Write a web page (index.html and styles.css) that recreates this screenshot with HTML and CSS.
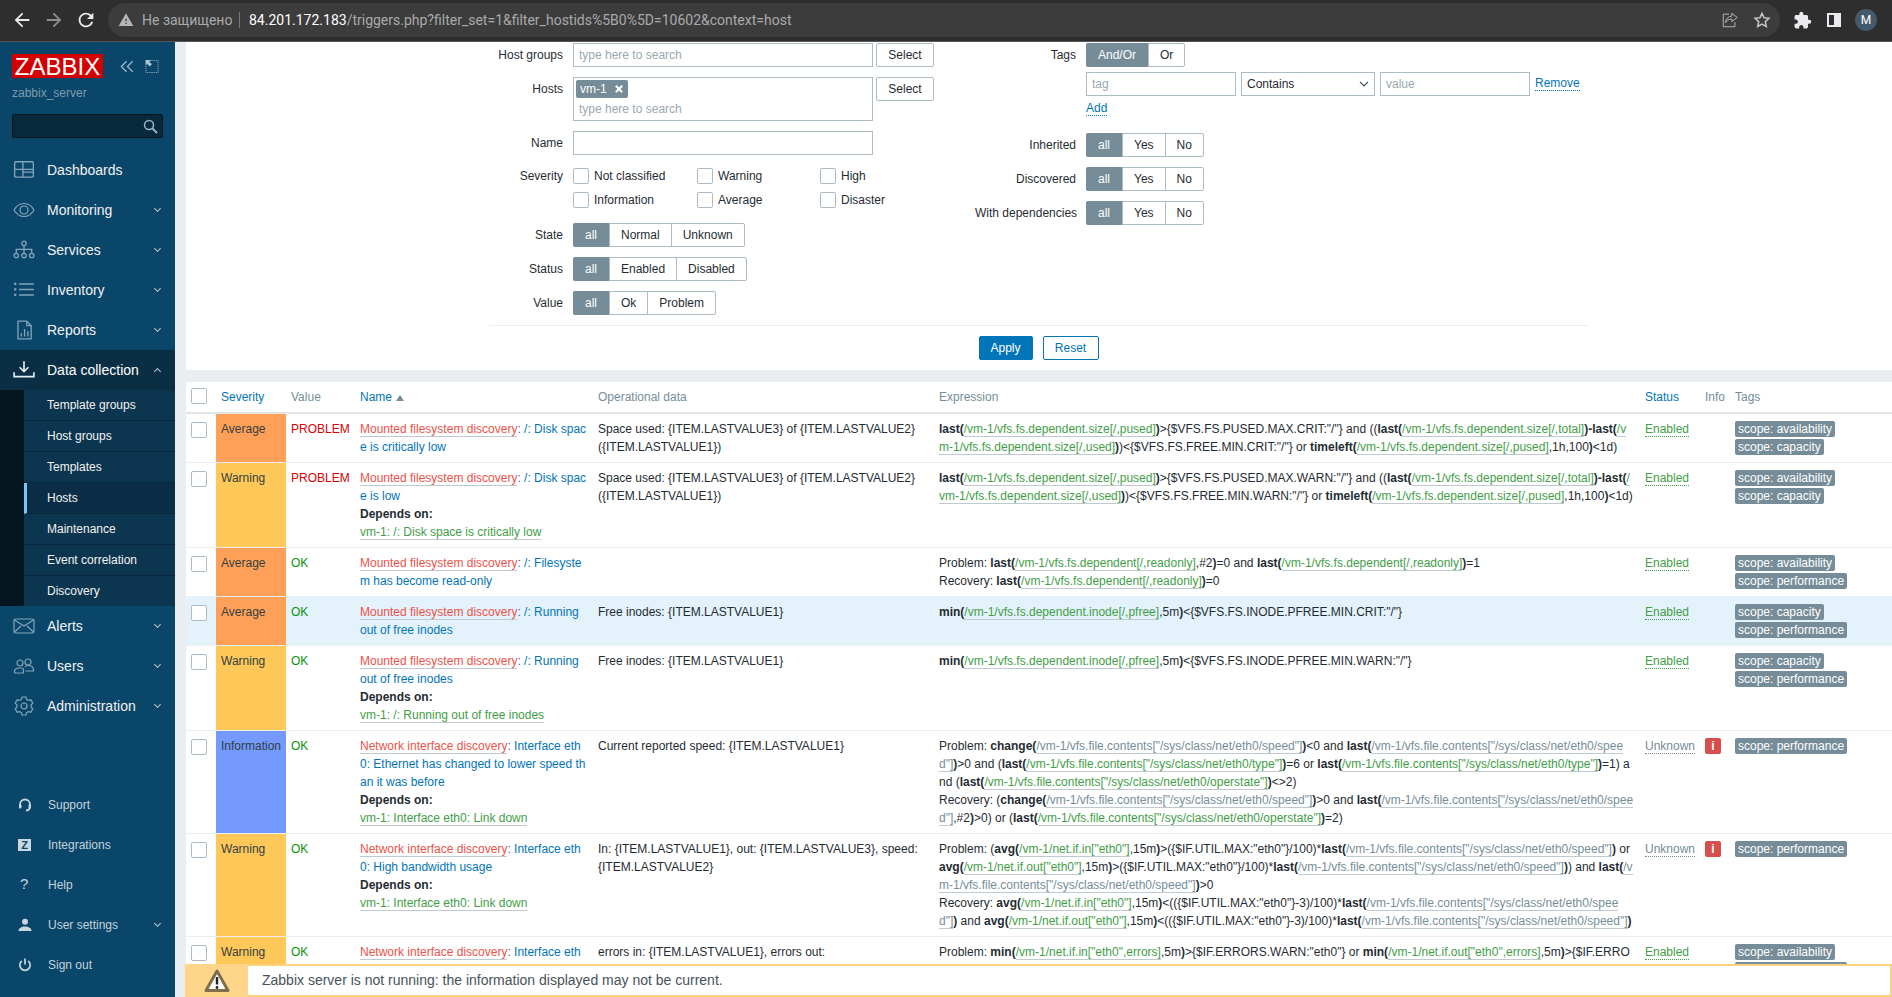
FILE: index.html
```html
<!DOCTYPE html>
<html lang="en">
<head>
  <meta charset="UTF-8" />
  <title>Configuration of triggers</title>
  <link rel="stylesheet" href="styles.css">
</head>
<body>

  <!-- browser chrome -->
  <div class="chrome">
    <svg class="nav-btn" viewBox="0 0 24 24"><path fill="#e8eaed" d="M20 11H7.83l5.59-5.59L12 4l-8 8 8 8 1.41-1.41L7.83 13H20v-2z"/></svg>
    <svg class="nav-btn" viewBox="0 0 24 24"><path fill="#8b8c8e" d="M4 11h12.17l-5.59-5.59L12 4l8 8-8 8-1.41-1.41L16.17 13H4v-2z"/></svg>
    <svg class="nav-btn" viewBox="0 0 24 24"><path fill="#e8eaed" d="M17.65 6.35A7.958 7.958 0 0012 4c-4.42 0-7.99 3.58-7.99 8s3.57 8 7.99 8c3.73 0 6.84-2.55 7.73-6h-2.08A5.99 5.99 0 0112 18c-3.31 0-6-2.69-6-6s2.69-6 6-6c1.66 0 3.14.69 4.22 1.78L13 11h7V4l-2.35 2.35z"/></svg>
    <div class="omnibox">
      <svg class="sec-icon" viewBox="0 0 24 24"><path fill="#b4b5b7" d="M1 21h22L12 2 1 21zm12-3h-2v-2h2v2zm0-4h-2v-4h2v4z"/></svg>
      <span class="sec-text">Не защищено</span>
      <span class="sec-sep"></span>
      <span class="url"><span class="url-host">84.201.172.183</span>/triggers.php?filter_set=1&amp;filter_hostids%5B0%5D=10602&amp;context=host</span>
      <svg class="omni-icon" viewBox="0 0 20 20" fill="none" stroke="#b4b5b7" stroke-width="1.1"><path d="M9 3.5H2.5v14h13v-5"/><path d="M12 2.5l6 4.7-6 4.6V9c-3.5 0-5.6 1.300-7 4 .3-4.200 2.800-7 7-7.300z"/></svg>
      <svg class="omni-icon star" viewBox="0 0 20 20" fill="none" stroke="#c4c5c7" stroke-width="1.700"><path d="M10 2.500l2.300 5 5.400.6-4 3.700 1.100 5.400L10 14.500l-4.800 2.700 1.100-5.400-4-3.700 5.400-.6z"/></svg>
    </div>
    <div class="chrome-btn"><svg width="19" height="19" viewBox="0 0 24 24"><path fill="#e8eaed" d="M20.500 11H19V7c0-1.100-.9-2-2-2h-4V3.500C13 2.120 11.880 1 10.500 1S8 2.120 8 3.500V5H4c-1.100 0-1.990.9-1.990 2v3.800H3.500c1.490 0 2.700 1.210 2.700 2.700s-1.210 2.700-2.700 2.700H2V20c0 1.100.9 2 2 2h3.800v-1.500c0-1.490 1.210-2.700 2.700-2.700 1.490 0 2.700 1.210 2.700 2.700V22H17c1.100 0 2-.9 2-2v-4h1.500c1.380 0 2.500-1.120 2.500-2.500S21.880 11 20.500 11z"/></svg></div>
    <div class="chrome-btn"><span class="side-panel"></span></div>
    <div class="chrome-btn"><span class="avatar">M</span></div>
  </div>

  <div class="app">

    <nav class="sidebar">
      <div class="logo-row">
        <span class="logo">ZABBIX</span>
        <svg class="logo-icon first" viewBox="0 0 16 14" fill="none" stroke="#a9c1d1" stroke-width="1.300"><path d="M7.500 1L1.500 7l6 6M14.500 1l-6 6 6 6"/></svg>
        <svg class="logo-icon" viewBox="0 0 14 14" fill="none" stroke="#a9c1d1"><path d="M5.500.5H13.500V13.500H.5V5.500" stroke-dasharray="1 1"/><path fill="#a9c1d1" stroke="none" d="M0 0h6L4.200 1.800 7 4.600 4.600 7 1.800 4.200 0 6z"/></svg>
      </div>
      <div class="server-name">zabbix_server</div>
      <div class="side-search">
        <svg width="15" height="15" viewBox="0 0 15 15" fill="none" stroke="#9db5c4" stroke-width="1.500"><circle cx="6" cy="6" r="4.500"/><path d="M9.500 9.500L14 14" stroke-width="2"/></svg>
      </div>

      <ul class="menu">
        <li class="menu-item">
          <svg class="menu-icon" viewBox="0 0 20 18"><rect x="1.500" y="1.500" width="17" height="14" rx="1"/><path d="M1.500 8.500h17M9 1.500v14M9 11h9.500"/></svg>
          Dashboards
        </li>
        <li class="menu-item">
          <svg class="menu-icon" viewBox="0 0 22 16"><path d="M1 8c2.500-4.500 6-6.500 10-6.500S18.500 3.500 21 8c-2.500 4.500-6 6.500-10 6.500S3.500 12.500 1 8z"/><circle cx="11" cy="8" r="4"/></svg>
          Monitoring <i class="chev"></i>
        </li>
        <li class="menu-item">
          <svg class="menu-icon" viewBox="0 0 20 18"><circle cx="10" cy="3" r="2"/><circle cx="3" cy="14" r="2"/><circle cx="10" cy="14" r="2"/><circle cx="17" cy="14" r="2"/><path d="M10 5v7M3 12V8.500h14V12"/></svg>
          Services <i class="chev"></i>
        </li>
        <li class="menu-item">
          <svg class="menu-icon" viewBox="0 0 20 18"><path d="M5.500 3.500H19M5.500 8.500H19M5.500 13.500H19" stroke-width="1.500"/><path d="M1 3.500h2M1 8.500h2M1 13.500h2" stroke-width="2"/></svg>
          Inventory <i class="chev"></i>
        </li>
        <li class="menu-item">
          <svg class="menu-icon" viewBox="0 0 20 18"><path d="M4.500 17V1h8l4 4v12z"/><path d="M12.500 1v4h4M7.500 15v-3M10.500 15V8M13.500 15v-5" /></svg>
          Reports <i class="chev"></i>
        </li>
        <li class="menu-item open">
          <svg class="menu-icon" viewBox="0 0 20 18"><path d="M10 1v9M6 6.500l4 4 4-4M1 11v4h18v-4" stroke-width="1.500"/></svg>
          Data collection <i class="chev up"></i>
        </li>
        <li class="submenu">
          <ul>
            <li>Template groups</li>
            <li>Host groups</li>
            <li>Templates</li>
            <li class="active">Hosts</li>
            <li>Maintenance</li>
            <li>Event correlation</li>
            <li>Discovery</li>
          </ul>
        </li>
        <li class="menu-item">
          <svg class="menu-icon" viewBox="0 0 22 16"><rect x="1" y="1" width="20" height="14" rx="1.500"/><path d="M1.500 2l9.500 6 9.500-6M1.500 14L8 8M20.500 14L14 8"/></svg>
          Alerts <i class="chev"></i>
        </li>
        <li class="menu-item">
          <svg class="menu-icon" viewBox="0 0 22 16"><circle cx="7" cy="5" r="3"/><circle cx="15" cy="4" r="3"/><path d="M1.500 15v-1.500c0-2 2-3.500 5-3.500h1c2 0 3 1 3 1.500V15zM12 9c1-1 2-1.500 3-1.500 3.500 0 5.500 2 5.500 4.500v1h-8"/></svg>
          Users <i class="chev"></i>
        </li>
        <li class="menu-item">
          <svg class="menu-icon" viewBox="0 0 20 20"><path d="M8 2h4l.6 2.300 1.900 1.100 2.300-.6 2 3.400-1.700 1.800 0 2-0 0 1.700 1.800-2 3.400-2.300-.6-1.900 1.100L12 20H8l-.6-2.300-1.900-1.100-2.300.6-2-3.400 1.700-1.800v-2L1.200 8.200l2-3.400 2.300.6 1.900-1.100z" transform="translate(0 -1)"/><circle cx="10" cy="10" r="3"/></svg>
          Administration <i class="chev"></i>
        </li>
      </ul>

      <ul class="menu-footer">
        <li>
          <svg class="foot-icon" viewBox="0 0 14 14" fill="none" stroke="#c9d6df" stroke-width="1.800"><path d="M2 8V6.500a5 5 0 0110 0V8"/><path d="M8 12.500c2 0 3.500-1 4-3"/><rect x="1" y="6.500" width="2.500" height="4" rx="1" fill="#c9d6df" stroke="none"/><rect x="10.500" y="6.500" width="2.500" height="4" rx="1" fill="#c9d6df" stroke="none"/></svg>
          Support
        </li>
        <li><span class="z-box">Z</span>Integrations</li>
        <li><span class="q-mark">?</span>Help</li>
        <li>
          <svg class="foot-icon" viewBox="0 0 14 14" fill="#c9d6df"><circle cx="7" cy="3.800" r="3"/><path d="M0.500 13c0-3 3-4.500 6.500-4.500s6.500 1.500 6.500 4.500z"/></svg>
          User settings <i class="chev"></i>
        </li>
        <li>
          <svg class="foot-icon" viewBox="0 0 14 14" fill="none" stroke="#c9d6df" stroke-width="1.700"><path d="M7 .5v6"/><path d="M3.800 3a5.200 5.200 0 106.400 0"/></svg>
          Sign out
        </li>
      </ul>
    </nav>

    <main class="main">

      <section class="filter">
        <div class="filter-cols">
          <div class="filter-left">
            <div class="form-row">
              <label class="form-label">Host groups</label>
              <input class="text-input wide" placeholder="type here to search">
              <button class="btn-select">Select</button>
            </div>
            <div class="form-row">
              <label class="form-label">Hosts</label>
              <div class="multiselect">
                <span class="chip">vm-1 <svg width="8" height="8" viewBox="0 0 8 8" stroke="#fff" stroke-width="2"><path d="M.8.800l6.400 6.400M7.200.800L.8 7.200"/></svg></span>
                <input class="multi-input" placeholder="type here to search">
              </div>
              <button class="btn-select">Select</button>
            </div>
            <div class="form-row name-row">
              <label class="form-label">Name</label>
              <input class="text-input wide">
            </div>
            <div class="form-row severity-row">
              <label class="form-label severity-label">Severity</label>
              <div class="severity-grid">
                <label class="check"><input type="checkbox" class="cb">Not classified</label>
                <label class="check"><input type="checkbox" class="cb">Warning</label>
                <label class="check"><input type="checkbox" class="cb">High</label>
                <label class="check"><input type="checkbox" class="cb">Information</label>
                <label class="check"><input type="checkbox" class="cb">Average</label>
                <label class="check"><input type="checkbox" class="cb">Disaster</label>
              </div>
            </div>
            <div class="form-row">
              <label class="form-label">State</label>
              <div class="seg"><span class="on">all</span><span>Normal</span><span>Unknown</span></div>
            </div>
            <div class="form-row">
              <label class="form-label">Status</label>
              <div class="seg"><span class="on">all</span><span>Enabled</span><span>Disabled</span></div>
            </div>
            <div class="form-row">
              <label class="form-label">Value</label>
              <div class="seg"><span class="on">all</span><span>Ok</span><span>Problem</span></div>
            </div>
          </div>

          <div class="filter-right">
            <div class="form-row tight">
              <label class="form-label">Tags</label>
              <div class="seg"><span class="on">And/Or</span><span>Or</span></div>
            </div>
            <div class="form-row tight">
              <span class="form-label"></span>
              <div class="tag-line">
                <input class="text-input tag-input" placeholder="tag">
                <div class="select-box">Contains <svg width="10" height="6" viewBox="0 0 10 6" fill="none" stroke="#3c4a52" stroke-width="1.200"><path d="M1 .8l4 4 4-4"/></svg></div>
                <input class="text-input tag-input" placeholder="value">
                <a class="act-link">Remove</a>
              </div>
            </div>
            <div class="form-row add-row">
              <span class="form-label"></span>
              <a class="act-link">Add</a>
            </div>
            <div class="form-row">
              <label class="form-label">Inherited</label>
              <div class="seg"><span class="on">all</span><span>Yes</span><span>No</span></div>
            </div>
            <div class="form-row">
              <label class="form-label">Discovered</label>
              <div class="seg"><span class="on">all</span><span>Yes</span><span>No</span></div>
            </div>
            <div class="form-row">
              <label class="form-label">With dependencies</label>
              <div class="seg"><span class="on">all</span><span>Yes</span><span>No</span></div>
            </div>
          </div>
        </div>
        <div class="filter-actions">
          <button class="btn-apply">Apply</button>
          <button class="btn-reset">Reset</button>
        </div>
      </section>

      <table class="triggers">
        <colgroup>
          <col class="c-check"><col class="c-sev"><col class="c-val"><col class="c-name"><col class="c-op"><col class="c-expr"><col class="c-status"><col class="c-info"><col>
        </colgroup>
        <thead>
          <tr>
            <th><input type="checkbox" class="cb"></th>
            <th class="sortable">Severity</th>
            <th>Value</th>
            <th class="sortable">Name <i class="sort-up"></i></th>
            <th>Operational data</th>
            <th>Expression</th>
            <th class="sortable">Status</th>
            <th>Info</th>
            <th>Tags</th>
          </tr>
        </thead>
        <tbody>
          <tr>
            <td><input type="checkbox" class="cb"></td>
            <td class="sev average">Average</td>
            <td class="problem">PROBLEM</td>
            <td class="name"><a class="tpl">Mounted filesystem discovery</a>: <a class="nm">/: Disk space is critically low</a></td>
            <td>Space used: {ITEM.LASTVALUE3} of {ITEM.LASTVALUE2} ({ITEM.LASTVALUE1})</td>
            <td class="expr"><b>last(</b><a>/vm-1/vfs.fs.dependent.size[/,pused]</a><b>)</b>&gt;{$VFS.FS.PUSED.MAX.CRIT:"/"} and ((<b>last(</b><a>/vm-1/vfs.fs.dependent.size[/,total]</a><b>)-last(</b><a>/vm-1/vfs.fs.dependent.size[/,used]</a><b>)</b>)&lt;{$VFS.FS.FREE.MIN.CRIT:"/"} or <b>timeleft(</b><a>/vm-1/vfs.fs.dependent.size[/,pused]</a>,1h,100<b>)</b>&lt;1d)</td>
            <td><a class="st ok">Enabled</a></td>
            <td></td>
            <td><span class="tag">scope: availability</span><span class="tag">scope: capacity</span></td>
          </tr>
          <tr>
            <td><input type="checkbox" class="cb"></td>
            <td class="sev warning">Warning</td>
            <td class="problem">PROBLEM</td>
            <td class="name"><a class="tpl">Mounted filesystem discovery</a>: <a class="nm">/: Disk space is low</a><br><strong>Depends on:</strong><br><a class="dep">vm-1: /: Disk space is critically low</a></td>
            <td>Space used: {ITEM.LASTVALUE3} of {ITEM.LASTVALUE2} ({ITEM.LASTVALUE1})</td>
            <td class="expr"><b>last(</b><a>/vm-1/vfs.fs.dependent.size[/,pused]</a><b>)</b>&gt;{$VFS.FS.PUSED.MAX.WARN:"/"} and ((<b>last(</b><a>/vm-1/vfs.fs.dependent.size[/,total]</a><b>)-last(</b><a>/vm-1/vfs.fs.dependent.size[/,used]</a><b>)</b>)&lt;{$VFS.FS.FREE.MIN.WARN:"/"} or <b>timeleft(</b><a>/vm-1/vfs.fs.dependent.size[/,pused]</a>,1h,100<b>)</b>&lt;1d)</td>
            <td><a class="st ok">Enabled</a></td>
            <td></td>
            <td><span class="tag">scope: availability</span><span class="tag">scope: capacity</span></td>
          </tr>
          <tr>
            <td><input type="checkbox" class="cb"></td>
            <td class="sev average">Average</td>
            <td class="okay">OK</td>
            <td class="name"><a class="tpl">Mounted filesystem discovery</a>: <a class="nm">/: Filesystem has become read-only</a></td>
            <td></td>
            <td class="expr">Problem: <b>last(</b><a>/vm-1/vfs.fs.dependent[/,readonly]</a>,#2<b>)</b>=0 and <b>last(</b><a>/vm-1/vfs.fs.dependent[/,readonly]</a><b>)</b>=1<br>Recovery: <b>last(</b><a>/vm-1/vfs.fs.dependent[/,readonly]</a><b>)</b>=0</td>
            <td><a class="st ok">Enabled</a></td>
            <td></td>
            <td><span class="tag">scope: availability</span><span class="tag">scope: performance</span></td>
          </tr>
          <tr class="hovered">
            <td><input type="checkbox" class="cb"></td>
            <td class="sev average">Average</td>
            <td class="okay">OK</td>
            <td class="name"><a class="tpl">Mounted filesystem discovery</a>: <a class="nm">/: Running out of free inodes</a></td>
            <td>Free inodes: {ITEM.LASTVALUE1}</td>
            <td class="expr"><b>min(</b><a>/vm-1/vfs.fs.dependent.inode[/,pfree]</a>,5m<b>)</b>&lt;{$VFS.FS.INODE.PFREE.MIN.CRIT:"/"}</td>
            <td><a class="st ok">Enabled</a></td>
            <td></td>
            <td><span class="tag">scope: capacity</span><span class="tag">scope: performance</span></td>
          </tr>
          <tr>
            <td><input type="checkbox" class="cb"></td>
            <td class="sev warning">Warning</td>
            <td class="okay">OK</td>
            <td class="name"><a class="tpl">Mounted filesystem discovery</a>: <a class="nm">/: Running out of free inodes</a><br><strong>Depends on:</strong><br><a class="dep">vm-1: /: Running out of free inodes</a></td>
            <td>Free inodes: {ITEM.LASTVALUE1}</td>
            <td class="expr"><b>min(</b><a>/vm-1/vfs.fs.dependent.inode[/,pfree]</a>,5m<b>)</b>&lt;{$VFS.FS.INODE.PFREE.MIN.WARN:"/"}</td>
            <td><a class="st ok">Enabled</a></td>
            <td></td>
            <td><span class="tag">scope: capacity</span><span class="tag">scope: performance</span></td>
          </tr>
          <tr>
            <td><input type="checkbox" class="cb"></td>
            <td class="sev information">Information</td>
            <td class="okay">OK</td>
            <td class="name"><a class="tpl">Network interface discovery</a>: <a class="nm">Interface eth0: Ethernet has changed to lower speed than it was before</a><br><strong>Depends on:</strong><br><a class="dep">vm-1: Interface eth0: Link down</a></td>
            <td>Current reported speed: {ITEM.LASTVALUE1}</td>
            <td class="expr">Problem: <b>change(</b><a class="un">/vm-1/vfs.file.contents["/sys/class/net/eth0/speed"]</a><b>)</b>&lt;0 and <b>last(</b><a class="un">/vm-1/vfs.file.contents["/sys/class/net/eth0/speed"]</a><b>)</b>&gt;0 and (<b>last(</b><a>/vm-1/vfs.file.contents["/sys/class/net/eth0/type"]</a><b>)</b>=6 or <b>last(</b><a>/vm-1/vfs.file.contents["/sys/class/net/eth0/type"]</a><b>)</b>=1) and (<b>last(</b><a>/vm-1/vfs.file.contents["/sys/class/net/eth0/operstate"]</a><b>)</b>&lt;&gt;2)<br>Recovery: (<b>change(</b><a class="un">/vm-1/vfs.file.contents["/sys/class/net/eth0/speed"]</a><b>)</b>&gt;0 and <b>last(</b><a class="un">/vm-1/vfs.file.contents["/sys/class/net/eth0/speed"]</a>,#2<b>)</b>&gt;0) or (<b>last(</b><a>/vm-1/vfs.file.contents["/sys/class/net/eth0/operstate"]</a><b>)</b>=2)</td>
            <td><a class="st un">Unknown</a></td>
            <td><span class="info-badge">i</span></td>
            <td><span class="tag">scope: performance</span></td>
          </tr>
          <tr>
            <td><input type="checkbox" class="cb"></td>
            <td class="sev warning">Warning</td>
            <td class="okay">OK</td>
            <td class="name"><a class="tpl">Network interface discovery</a>: <a class="nm">Interface eth0: High bandwidth usage</a><br><strong>Depends on:</strong><br><a class="dep">vm-1: Interface eth0: Link down</a></td>
            <td>In: {ITEM.LASTVALUE1}, out: {ITEM.LASTVALUE3}, speed: {ITEM.LASTVALUE2}</td>
            <td class="expr">Problem: (<b>avg(</b><a>/vm-1/net.if.in["eth0"]</a>,15m<b>)</b>&gt;({$IF.UTIL.MAX:"eth0"}/100)*<b>last(</b><a class="un">/vm-1/vfs.file.contents["/sys/class/net/eth0/speed"]</a><b>)</b> or <b>avg(</b><a>/vm-1/net.if.out["eth0"]</a>,15m<b>)</b>&gt;({$IF.UTIL.MAX:"eth0"}/100)*<b>last(</b><a class="un">/vm-1/vfs.file.contents["/sys/class/net/eth0/speed"]</a><b>)</b>) and <b>last(</b><a class="un">/vm-1/vfs.file.contents["/sys/class/net/eth0/speed"]</a><b>)</b>&gt;0<br>Recovery: <b>avg(</b><a>/vm-1/net.if.in["eth0"]</a>,15m<b>)</b>&lt;(({$IF.UTIL.MAX:"eth0"}-3)/100)*<b>last(</b><a class="un">/vm-1/vfs.file.contents["/sys/class/net/eth0/speed"]</a><b>)</b> and <b>avg(</b><a>/vm-1/net.if.out["eth0"]</a>,15m<b>)</b>&lt;(({$IF.UTIL.MAX:"eth0"}-3)/100)*<b>last(</b><a class="un">/vm-1/vfs.file.contents["/sys/class/net/eth0/speed"]</a><b>)</b></td>
            <td><a class="st un">Unknown</a></td>
            <td><span class="info-badge">i</span></td>
            <td><span class="tag">scope: performance</span></td>
          </tr>
          <tr>
            <td><input type="checkbox" class="cb"></td>
            <td class="sev warning">Warning</td>
            <td class="okay">OK</td>
            <td class="name"><a class="tpl">Network interface discovery</a>: <a class="nm">Interface eth0: High error rate</a></td>
            <td>errors in: {ITEM.LASTVALUE1}, errors out: {ITEM.LASTVALUE2}</td>
            <td class="expr">Problem: <b>min(</b><a>/vm-1/net.if.in["eth0",errors]</a>,5m<b>)</b>&gt;{$IF.ERRORS.WARN:"eth0"} or <b>min(</b><a>/vm-1/net.if.out["eth0",errors]</a>,5m<b>)</b>&gt;{$IF.ERRORS.WARN:"eth0"}</td>
            <td><a class="st ok">Enabled</a></td>
            <td></td>
            <td><span class="tag">scope: availability</span><span class="tag">scope: performance</span></td>
          </tr>
        </tbody>
      </table>

      <div class="server-msg">
        <div class="msg-icon">
          <svg width="26" height="24" viewBox="0 0 26 24"><path d="M13 2L2 21.500h22z" fill="#fff" stroke="#7f6d4c" stroke-width="3" stroke-linejoin="round"/><path d="M13 8v7.500" stroke="#222" stroke-width="2.400"/><circle cx="13" cy="18.500" r="1.400" fill="#222"/></svg>
        </div>
        <div class="msg-text">Zabbix server is not running: the information displayed may not be current.</div>
      </div>
    </main>
  </div>

</body>
</html>
```

FILE: styles.css
```css
* {
  margin: 0;
  padding: 0;
  box-sizing: border-box;
}

html, body {
  height: 100%;
  overflow: hidden;
}

body {
  font-family: 'Liberation Sans', Arial, sans-serif;
  font-size: 12px;
  line-height: 18px;
  color: #1f2c33;
  background: #fff;
}

ul {
  list-style: none;
}

/* browser chrome */
.chrome {
  height: 42px;
  display: flex;
  align-items: center;
  padding: 0 10px 1px 6px;
  background: #2e2e2e;
  border-bottom: 1px solid #565656;
  font-family: Roboto, sans-serif;
  font-size: 14px;
}

.nav-btn {
  width: 32px;
  height: 22px;
  flex: none;
}

.omnibox {
  flex: 1;
  height: 34px;
  margin: 0 6px;
  padding: 0 9px 0 10px;
  display: flex;
  align-items: center;
  background: #3c3c3c;
  border-radius: 17px;
}

.sec-icon {
  width: 16px;
  height: 16px;
  margin-right: 8px;
}

.sec-text {
  width: 89px;
  color: #a9aaac;
  white-space: nowrap;
}

.sec-sep {
  width: 1px;
  height: 16px;
  margin: 0 9px 0 8px;
  background: #77787a;
}

.url {
  flex: 1;
  color: #a9aaac;
  white-space: nowrap;
}

.url-host {
  color: #fff;
}

.omni-icon {
  width: 18px;
  height: 18px;
}

.omni-icon.star {
  margin-left: 14px;
}

.chrome-btn {
  width: 32px;
  flex: none;
  display: flex;
  justify-content: center;
  align-items: center;
}

.side-panel {
  width: 14px;
  height: 14px;
  border: 2px solid #e8eaed;
  border-left-width: 2px;
  background: linear-gradient(to right, #2e2e2e 50%, #e8eaed 50%);
}

.avatar {
  width: 22px;
  height: 22px;
  border-radius: 50%;
  background: #44596a;
  color: #fff;
  font-size: 12px;
  line-height: 22px;
  text-align: center;
}

.app {
  height: 955px;
  display: flex;
  overflow: hidden;
}

/* sidebar */
.sidebar {
  width: 175px;
  flex: none;
  display: flex;
  flex-direction: column;
  padding-top: 12px;
  background: #0a466a;
  color: #f2f2f2;
}

.logo-row {
  display: flex;
  align-items: center;
  padding-left: 12px;
  height: 24px;
}

.logo {
  width: 91px;
  height: 24px;
  background: #d40000;
  color: #fff;
  font-size: 24px;
  line-height: 25px;
  text-align: center;
}

.logo-icon {
  width: 14px;
  height: 13px;
  margin-left: 11px;
}

.logo-icon.first {
  margin-left: 17px;
}

.server-name {
  margin: 6px 12px 0;
  color: #7e9bae;
}

.side-search {
  height: 24px;
  margin: 12px 12px 12px;
  padding-right: 4px;
  display: flex;
  align-items: center;
  justify-content: flex-end;
  background: #08283c;
  border: 1px solid #04171f;
  border-radius: 2px;
}

.menu-item {
  position: relative;
  height: 40px;
  display: flex;
  align-items: center;
  padding-left: 47px;
  font-size: 14px;
}

.menu-item.open {
  background: #0a2f45;
  color: #fff;
}

.menu-icon {
  position: absolute;
  left: 13px;
  top: 10px;
  width: 22px;
  height: 20px;
  fill: none;
  stroke: #84a4b8;
  stroke-width: 1.200;
}

.open .menu-icon {
  stroke: #e8eef2;
}

.chev {
  position: absolute;
  right: 15px;
  top: 50%;
  width: 5px;
  height: 5px;
  margin-top: -4px;
  border-right: 1px solid #b7c9d4;
  border-bottom: 1px solid #b7c9d4;
  transform: rotate(45deg);
}

.chev.up {
  margin-top: -1px;
  transform: rotate(-135deg);
}

.submenu {
  padding-left: 24px;
  background: #04161f;
}

.submenu li {
  height: 31px;
  padding: 6px 0 0 23px;
  background: #0c3550;
  border-bottom: 1px solid #07263a;
  color: #f2f2f2;
}

.submenu li:last-child {
  height: 30px;
  border-bottom: none;
}

.submenu li.active {
  padding-left: 20px;
  background: #0b2e46;
  border-left: 3px solid #7cc5fa;
}

.menu-footer {
  margin-top: auto;
  padding-bottom: 12px;
}

.menu-footer li {
  position: relative;
  height: 40px;
  display: flex;
  align-items: center;
  padding-left: 48px;
  color: #c4d2dc;
}

.foot-icon {
  position: absolute;
  left: 18px;
  top: 13px;
  width: 14px;
  height: 14px;
}

.z-box {
  position: absolute;
  left: 18px;
  top: 14px;
  width: 13px;
  height: 12px;
  background: #c9d6df;
  color: #0a466a;
  font-size: 11px;
  font-weight: bold;
  line-height: 12px;
  text-align: center;
}

.q-mark {
  position: absolute;
  left: 20px;
  top: 10px;
  font-size: 15px;
  color: #c9d6df;
}

/* main area */
.main {
  position: relative;
  flex: 1;
  min-width: 0;
  padding-left: 10px;
  background: #ebeef0;
  overflow: hidden;
}

.filter {
  margin: 0 0 12px 1px;
  padding: 1px 0 10px 303px;
  background: #fff;
}

.filter-cols {
  display: flex;
}

.filter-left {
  width: 486px;
  flex: none;
}

.form-row {
  display: flex;
  margin-bottom: 10px;
}

.form-row:last-child {
  margin-bottom: 0;
}

.form-row.tight {
  margin-bottom: 5px;
}

.form-label {
  width: 74px;
  flex: none;
  margin-right: 10px;
  line-height: 24px;
  text-align: right;
  white-space: nowrap;
}

.filter-right .form-label {
  width: 101px;
}

.text-input {
  height: 24px;
  padding: 0 5px;
  border: 1px solid #acbbc4;
  font: inherit;
  color: #1f2c33;
  outline: none;
}

.text-input::placeholder,
.multi-input::placeholder {
  color: #9aa8b0;
  opacity: 1;
}

.wide {
  width: 300px;
}

.btn-select {
  width: 58px;
  height: 24px;
  margin-left: 3px;
  background: #fff;
  border: 1px solid #acbbc4;
  border-radius: 2px;
  font: inherit;
  color: #1f2c33;
}

.multiselect {
  width: 300px;
  height: 44px;
  padding: 2px 5px 0 2px;
  border: 1px solid #acbbc4;
}

.chip {
  display: flex;
  align-items: center;
  justify-content: space-between;
  width: 52px;
  height: 18px;
  padding: 0 5px 0 4px;
  background: #768d99;
  border-radius: 2px;
  color: #fff;
}

.multi-input {
  display: block;
  width: 280px;
  height: 22px;
  margin-left: 3px;
  border: none;
  font: inherit;
  outline: none;
}

.name-row {
  margin-bottom: 13px;
}

.severity-row {
  margin-bottom: 14px;
}

.severity-label {
  line-height: 17px;
}

.severity-grid {
  display: grid;
  grid-template-columns: 124px 123px 100px;
  row-gap: 7px;
}

.check {
  display: flex;
  align-items: center;
  height: 18px;
  margin-top: -1px;
}

.cb {
  appearance: none;
  display: block;
  width: 16px;
  height: 16px;
  flex: none;
  background: #fff;
  border: 1px solid #acbbc4;
  border-radius: 2px;
}

.check .cb {
  margin-right: 5px;
}

.seg {
  display: flex;
  height: 24px;
  line-height: 22px;
  border: 1px solid #acbbc4;
  border-radius: 2px;
}

.seg span {
  padding: 0 11px;
  border-left: 1px solid #acbbc4;
  white-space: nowrap;
}

.seg span.on {
  margin: -1px 0 -1px -1px;
  padding: 1px 12px;
  background: #768d99;
  border: none;
  border-radius: 2px 0 0 2px;
  color: #fff;
}

.tag-line {
  display: flex;
  align-items: center;
}

.tag-input {
  width: 150px;
}

.select-box {
  width: 134px;
  height: 24px;
  margin: 0 5px;
  padding: 0 5px;
  display: flex;
  align-items: center;
  justify-content: space-between;
  border: 1px solid #acbbc4;
}

.act-link {
  color: #0275b8;
  border-bottom: 1px dotted #0275b8;
  line-height: 14px;
}

.tag-line .act-link {
  margin: -2px 0 0 5px;
}

.add-row {
  height: 22px;
  margin-bottom: 10px;
  align-items: flex-start;
}

.add-row .form-label {
  line-height: 18px;
}

.filter-actions {
  width: 1099px;
  margin-top: 10px;
  padding-top: 10px;
  display: flex;
  justify-content: center;
  gap: 10px;
  border-top: 1px solid #ebeef0;
}

.btn-apply,
.btn-reset {
  height: 24px;
  font: inherit;
  border-radius: 2px;
}

.btn-apply {
  width: 54px;
  background: #0275b8;
  border: 1px solid #0275b8;
  color: #fff;
}

.btn-reset {
  width: 56px;
  background: #fff;
  border: 1px solid #0275b8;
  color: #0275b8;
}

/* triggers table */
.triggers {
  width: calc(100% - 1px);
  margin-left: 1px;
  table-layout: fixed;
  border-collapse: separate;
  border-spacing: 0;
  background: #fff;
}

.c-check { width: 30px; }
.c-sev { width: 70px; }
.c-val { width: 69px; }
.c-name { width: 238px; }
.c-op { width: 341px; }
.c-expr { width: 706px; }
.c-status { width: 60px; }
.c-info { width: 30px; }

.triggers th {
  height: 32px;
  padding: 6px 5px;
  text-align: left;
  font-weight: normal;
  color: #768d99;
  border-bottom: 2px solid #dfe4e7;
  vertical-align: top;
}

.triggers th.sortable {
  color: #0275b8;
}

.sort-up {
  display: inline-block;
  margin-left: 1px;
  border-left: 4px solid transparent;
  border-right: 4px solid transparent;
  border-bottom: 6px solid #768d99;
}

.triggers td {
  padding: 6px 5px;
  vertical-align: top;
  border-bottom: 1px solid #ebeef0;
}

.triggers .cb {
  margin-top: 2px;
}

.triggers th .cb {
  margin-top: 0;
}

.hovered td {
  background: #e4f2fb;
}

.sev.average { background: #ffa059; }
.sev.warning { background: #ffc859; }
.sev.information { background: #7499ff; }
.triggers .sev { color: #33403f; }

.problem { color: #dc0000; }
.okay { color: #0a930a; }

.name,
.expr {
  word-break: break-all;
}

.tpl {
  color: #ee5148;
  border-bottom: 1px solid #bfcad0;
}

.nm {
  color: #0275b8;
}

.name {
  color: #0275b8;
}

.name strong {
  color: #1f2c33;
}

.dep {
  color: #429e47;
  border-bottom: 1px solid #bfcad0;
}

.expr a {
  color: #429e47;
  border-bottom: 1px solid #bfcad0;
}

.expr a.un {
  color: #768d99;
}

.st {
  border-bottom: 1px dotted;
}

.st.ok { color: #429e47; }
.st.un { color: #768d99; }

.tag {
  display: table;
  height: 16px;
  margin-top: 1px;
  padding: 0 3px;
  line-height: 16px;
  background: #768d99;
  border-radius: 2px;
  color: #fff;
  white-space: nowrap;
}

.tag + .tag {
  margin-top: 2px;
}

.info-badge {
  display: block;
  width: 16px;
  height: 16px;
  margin-top: 1px;
  background: #d64e4e;
  border-radius: 2px;
  color: #fff;
  font-weight: bold;
  line-height: 16px;
  text-align: center;
}

/* stuck to the bottom over the table */
.server-msg {
  position: absolute;
  left: 10px;
  right: 0;
  bottom: 0;
  height: 33px;
  display: flex;
  background: #fff;
  border: 2px solid #ffd27f;
  border-left: none;
}

.msg-icon {
  width: 63px;
  margin-top: -2px;
  margin-bottom: -2px;
  display: flex;
  align-items: center;
  justify-content: center;
  background: #ffd58a;
}

.msg-text {
  padding-left: 14px;
  font-size: 14px;
  line-height: 29px;
  color: #47525a;
}
```
